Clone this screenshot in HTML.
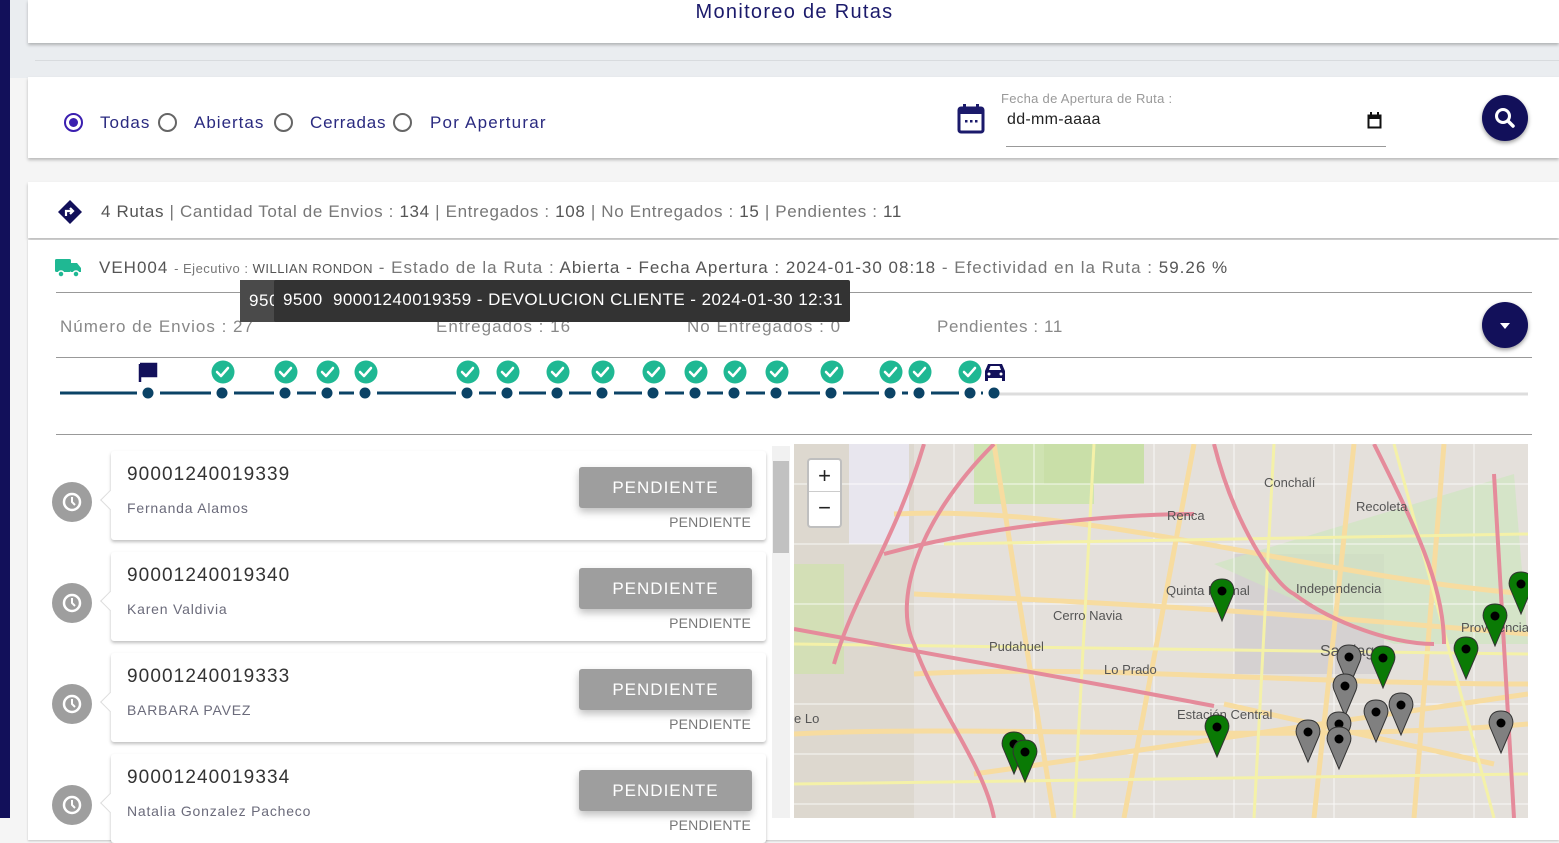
<!DOCTYPE html>
<html><head><meta charset="utf-8"><style>
*{box-sizing:border-box;margin:0;padding:0}
body{width:1559px;height:818px;overflow:hidden;background:#f5f5f5;font-family:"Liberation Sans",sans-serif;position:relative;color:#555;letter-spacing:.6px}
.abs{position:absolute}
.card{position:absolute;background:#fff;box-shadow:0 2px 3px rgba(0,0,0,.25)}
.navy{color:#1b1a6b}
</style></head><body>
<div class="abs" style="left:0;top:0;width:10px;height:818px;background:#12105a"></div>
<div class="abs" style="left:10px;top:0;width:1549px;height:78px;background:#eaedf0"></div>
<div class="abs" style="left:35px;top:60px;width:1524px;height:1px;background:#d8dbde"></div>
<div class="card" style="left:28px;top:0;width:1531px;height:43px"></div>
<div class="abs navy" style="left:0;width:1589px;top:1px;text-align:center;font-size:20px;letter-spacing:1.3px">Monitoreo de Rutas</div>

<div class="card" style="left:28px;top:77px;width:1531px;height:81px"></div>
<div class="abs" style="left:64px;top:113px;width:19px;height:19px;border:2px solid #3b1fb0;border-radius:50%"><div style="margin:3px;width:9px;height:9px;border-radius:50%;background:#3b1fb0"></div></div>
<div class="abs" style="left:100px;top:113px;font-size:17px;color:#2a2a80;letter-spacing:1px">Todas</div>
<div class="abs" style="left:158px;top:113px;width:19px;height:19px;border:2px solid #666;border-radius:50%"></div>
<div class="abs" style="left:194px;top:113px;font-size:17px;color:#2a2a80;letter-spacing:1px">Abiertas</div>
<div class="abs" style="left:274px;top:113px;width:19px;height:19px;border:2px solid #666;border-radius:50%"></div>
<div class="abs" style="left:310px;top:113px;font-size:17px;color:#2a2a80;letter-spacing:.8px">Cerradas</div>
<div class="abs" style="left:393px;top:113px;width:19px;height:19px;border:2px solid #666;border-radius:50%"></div>
<div class="abs" style="left:430px;top:113px;font-size:17px;color:#2a2a80;letter-spacing:1.2px">Por Aperturar</div>
<svg class="abs" style="left:957px;top:104px" width="28" height="30" viewBox="0 0 28 30"><rect x="2" y="4" width="24" height="24" rx="2" fill="none" stroke="#1b1a6b" stroke-width="3"/><rect x="2" y="4" width="24" height="6" fill="#1b1a6b"/><rect x="6" y="0" width="3" height="6" fill="#1b1a6b"/><rect x="19" y="0" width="3" height="6" fill="#1b1a6b"/><rect x="8" y="16" width="2.5" height="2.5" fill="#1b1a6b"/><rect x="13" y="16" width="2.5" height="2.5" fill="#1b1a6b"/><rect x="18" y="16" width="2.5" height="2.5" fill="#1b1a6b"/></svg>
<div class="abs" style="left:1001px;top:91px;font-size:13px;color:#999;letter-spacing:.3px">Fecha de Apertura de Ruta :</div>
<div class="abs" style="left:1007px;top:111px;font-size:16px;color:#222;letter-spacing:.3px">dd-mm-aaaa</div>
<svg class="abs" style="left:1367px;top:112px" width="15" height="17"><rect x="1.5" y="3.5" width="12" height="12" fill="none" stroke="#111" stroke-width="2"/><rect x="1" y="3" width="13" height="4" fill="#111"/><rect x="3" y="0" width="2" height="4" fill="#111"/><rect x="10" y="0" width="2" height="4" fill="#111"/></svg>
<div class="abs" style="left:1006px;top:146px;width:380px;height:1px;background:#999"></div>
<div class="abs" style="left:1482px;top:95px;width:46px;height:46px;border-radius:50%;background:#12105a;box-shadow:0 2px 4px rgba(0,0,0,.4)"><svg width="46" height="46"><circle cx="21" cy="21" r="6.5" fill="none" stroke="#fff" stroke-width="3"/><line x1="26" y1="26" x2="31" y2="31" stroke="#fff" stroke-width="3.5" stroke-linecap="round"/></svg></div>

<div class="card" style="left:28px;top:182px;width:1531px;height:56px"></div>
<svg class="abs" style="left:57px;top:199px" width="26" height="26" viewBox="0 0 26 26"><path d="M13 1 L25 13 L13 25 L1 13Z" fill="#12105a"/><path d="M9 17 V12 H15 M13 9 L16 12 L13 15" fill="none" stroke="#fff" stroke-width="2.2"/></svg>
<div class="abs" style="left:101px;top:202px;font-size:17px;color:#777;white-space:nowrap;letter-spacing:.65px"><span style="color:#555">4 Rutas</span> | Cantidad Total de Envios : <span style="color:#555">134</span> | Entregados : <span style="color:#555">108</span> | No Entregados : <span style="color:#555">15</span> | Pendientes : <span style="color:#555">11</span></div>

<div class="card" style="left:28px;top:240px;width:1531px;height:600px;box-shadow:0 1px 2px rgba(0,0,0,.2)"></div>
<svg class="abs" style="left:55px;top:258px" width="27" height="20" viewBox="0 0 27 20"><rect x="0" y="1" width="16" height="13" rx="1.5" fill="#1fb893"/><path d="M16 5 H22 L26 10 V14 H16Z" fill="#1fb893"/><circle cx="6" cy="16" r="3" fill="#1fb893" stroke="#fff" stroke-width="1.5"/><circle cx="21" cy="16" r="3" fill="#1fb893" stroke="#fff" stroke-width="1.5"/></svg>
<div class="abs" style="left:99px;top:258px;font-size:17px;color:#777;white-space:nowrap;letter-spacing:1.0px"><span style="color:#555">VEH004</span> <span style="font-size:13px;letter-spacing:.5px">- Ejecutivo : <span style="color:#555">WILLIAN RONDON</span></span> - Estado de la Ruta : <span style="color:#555">Abierta - Fecha Apertura : 2024-01-30 08:18</span> - Efectividad en la Ruta : <span style="color:#555">59.26 %</span></div>
<div class="abs" style="left:56px;top:292px;width:1476px;height:1px;background:#999"></div>
<div class="abs" style="left:60px;top:317px;font-size:17px;color:#888;letter-spacing:1px">Número de Envios : 27</div>
<div class="abs" style="left:436px;top:317px;font-size:17px;color:#888;letter-spacing:1px">Entregados : 16</div>
<div class="abs" style="left:687px;top:317px;font-size:17px;color:#888;letter-spacing:1px">No Entregados : 0</div>
<div class="abs" style="left:937px;top:317px;font-size:17px;color:#888;letter-spacing:.6px">Pendientes : 11</div>
<div class="abs" style="left:1482px;top:302px;width:46px;height:46px;border-radius:50%;background:#12105a;box-shadow:0 2px 4px rgba(0,0,0,.4)"><svg width="46" height="46"><path d="M18 21 H28 L23 27Z" fill="#fff"/></svg></div>
<div class="abs" style="left:240px;top:280px;width:110px;height:42px;background:#4a4a4a;color:#fff;font-size:17px;padding:11px 9px">950</div>
<div class="abs" style="left:274px;top:280px;width:576px;height:42px;background:#333;color:#fff;font-size:17px;padding:10px 9px;white-space:nowrap;border-radius:2px;letter-spacing:.45px">9500&nbsp; 90001240019359 - DEVOLUCION CLIENTE - 2024-01-30 12:31</div>
<div class="abs" style="left:56px;top:357px;width:1476px;height:1px;background:#999"></div>

<svg class="abs" style="left:0;top:355px" width="1559" height="50">
<line x1="995" y1="39" x2="1528" y2="39" stroke="#ddd" stroke-width="3"/>
<g stroke="#0b4366" stroke-width="3">
<line x1="60" y1="38" x2="137" y2="38"/><line x1="160" y1="38" x2="211" y2="38"/><line x1="234" y1="38" x2="274" y2="38"/><line x1="297" y1="38" x2="316" y2="38"/><line x1="339" y1="38" x2="354" y2="38"/><line x1="377" y1="38" x2="456" y2="38"/><line x1="479" y1="38" x2="496" y2="38"/><line x1="519" y1="38" x2="546" y2="38"/><line x1="569" y1="38" x2="591" y2="38"/><line x1="614" y1="38" x2="642" y2="38"/><line x1="665" y1="38" x2="684" y2="38"/><line x1="707" y1="38" x2="723" y2="38"/><line x1="746" y1="38" x2="765" y2="38"/><line x1="788" y1="38" x2="820" y2="38"/><line x1="843" y1="38" x2="879" y2="38"/><line x1="902" y1="38" x2="908" y2="38"/><line x1="931" y1="38" x2="959" y2="38"/><line x1="981" y1="38" x2="983" y2="38"/>
</g>
<g fill="#0b4366">
<circle cx="148" cy="38" r="5.5"/><circle cx="222" cy="38" r="5.5"/><circle cx="285" cy="38" r="5.5"/><circle cx="327" cy="38" r="5.5"/><circle cx="365" cy="38" r="5.5"/><circle cx="467" cy="38" r="5.5"/><circle cx="507" cy="38" r="5.5"/><circle cx="557" cy="38" r="5.5"/><circle cx="602" cy="38" r="5.5"/><circle cx="653" cy="38" r="5.5"/><circle cx="695" cy="38" r="5.5"/><circle cx="734" cy="38" r="5.5"/><circle cx="776" cy="38" r="5.5"/><circle cx="831" cy="38" r="5.5"/><circle cx="890" cy="38" r="5.5"/><circle cx="919" cy="38" r="5.5"/><circle cx="970" cy="38" r="5.5"/><circle cx="994" cy="38" r="5.5"/>
</g>
<path d="M140 9 V27 M140 9 H156 V21 H140" fill="#12105a" stroke="#12105a" stroke-width="2.5"/>
<g fill="#1fb893">
<circle cx="223" cy="17" r="11.5"/><circle cx="286" cy="17" r="11.5"/><circle cx="328" cy="17" r="11.5"/><circle cx="366" cy="17" r="11.5"/><circle cx="468" cy="17" r="11.5"/><circle cx="508" cy="17" r="11.5"/><circle cx="558" cy="17" r="11.5"/><circle cx="603" cy="17" r="11.5"/><circle cx="654" cy="17" r="11.5"/><circle cx="696" cy="17" r="11.5"/><circle cx="735" cy="17" r="11.5"/><circle cx="777" cy="17" r="11.5"/><circle cx="832" cy="17" r="11.5"/><circle cx="891" cy="17" r="11.5"/><circle cx="920" cy="17" r="11.5"/><circle cx="970" cy="17" r="11.5"/>
</g>
<g fill="none" stroke="#fff" stroke-width="2.5" stroke-linecap="round" stroke-linejoin="round">
<path d="M217 17l4 4 7-8"/><path d="M280 17l4 4 7-8"/><path d="M322 17l4 4 7-8"/><path d="M360 17l4 4 7-8"/><path d="M462 17l4 4 7-8"/><path d="M502 17l4 4 7-8"/><path d="M552 17l4 4 7-8"/><path d="M597 17l4 4 7-8"/><path d="M648 17l4 4 7-8"/><path d="M690 17l4 4 7-8"/><path d="M729 17l4 4 7-8"/><path d="M771 17l4 4 7-8"/><path d="M826 17l4 4 7-8"/><path d="M885 17l4 4 7-8"/><path d="M914 17l4 4 7-8"/><path d="M964 17l4 4 7-8"/>
</g>
<path d="M985 26 V16 L988 9 H1002 L1005 16 V26 H1002 V23 H988 V26Z" fill="#12105a"/><path d="M989 15 L990.5 11 H999.5 L1001 15Z" fill="#fff"/><circle cx="989" cy="19" r="1.5" fill="#fff"/><circle cx="1001" cy="19" r="1.5" fill="#fff"/>
</svg>
<div class="abs" style="left:56px;top:434px;width:1476px;height:1px;background:#999"></div>

<div class="abs" style="left:772px;top:446px;width:18px;height:372px;background:#f1f1f1"></div>
<div class="abs" style="left:773px;top:461px;width:16px;height:92px;background:#c1c1c1"></div>

<div id="list"></div>
<script>
var items=[["90001240019339","Fernanda Alamos",451],["90001240019340","Karen Valdivia",552],["90001240019333","BARBARA PAVEZ",653],["90001240019334","Natalia Gonzalez Pacheco",754]];
var h="";
items.forEach(function(it){var t=it[2];
h+='<div class="card" style="left:111px;top:'+t+'px;width:655px;height:89px;border-radius:3px"></div>';
h+='<div class="abs" style="left:103px;top:'+(t+42)+'px;width:14px;height:14px;background:#fff;transform:rotate(45deg);border-left:1px solid #ddd;border-bottom:1px solid #ddd"></div>';
h+='<div class="abs" style="left:52px;top:'+(t+31)+'px;width:40px;height:40px;border-radius:50%;background:#9e9e9e"><svg width="40" height="40"><circle cx="20" cy="20" r="8" fill="none" stroke="#fff" stroke-width="2.5"/><path d="M20 15v5l3 3" fill="none" stroke="#fff" stroke-width="2"/></svg></div>';
h+='<div class="abs" style="left:127px;top:'+(t+13)+'px;font-size:19px;color:#333;letter-spacing:1.1px">'+it[0]+'</div>';
h+='<div class="abs" style="left:127px;top:'+(t+49)+'px;font-size:14px;color:#6b6b7b;letter-spacing:.8px">'+it[1]+'</div>';
h+='<div class="abs" style="left:579px;top:'+(t+16)+'px;width:173px;height:41px;background:#9e9e9e;border-radius:3px;box-shadow:0 4px 8px rgba(0,0,0,.25);color:#fff;font-size:17px;text-align:center;line-height:41px;letter-spacing:1px">PENDIENTE</div>';
h+='<div class="abs" style="left:600px;width:151px;text-align:right;top:'+(t+63)+'px;font-size:14px;color:#777;letter-spacing:.2px">PENDIENTE</div>';
});
document.getElementById('list').innerHTML=h;
</script>

<div class="abs" style="left:794px;top:444px;width:734px;height:374px;background:#e4e0db;overflow:hidden;letter-spacing:0">
<svg width="734" height="374" style="position:absolute;left:0;top:0">
<rect x="0" y="0" width="120" height="374" fill="#ddd8cf"/>
<rect x="0" y="120" width="50" height="110" fill="#d3dfb6"/>
<rect x="180" y="0" width="120" height="60" fill="#cfe3b2"/>
<rect x="440" y="110" width="150" height="120" fill="#d5d1d1"/>
<path d="M420 120 L720 30 L734 200 L600 200Z" fill="#cfe6c0" opacity=".7"/>
<rect x="250" y="0" width="100" height="40" fill="#c9dfa8"/>
<rect x="55" y="0" width="60" height="100" fill="#e8e6ee"/>
<g stroke="#fff" stroke-width="1" fill="none" opacity=".8">
<path d="M0 40 H734 M0 100 H734 M0 160 H734 M0 260 H734 M0 310 H734 M0 360 H734"/>
<path d="M160 0 V374 M240 0 V374 M360 0 V374 M440 0 V374 M540 0 V374 M680 0 V374"/>
</g>
<g stroke="#f7dca0" stroke-width="5" fill="none">
<path d="M100 70 C300 60 500 130 734 150"/><path d="M120 230 C300 220 500 240 734 240"/><path d="M0 290 C200 280 500 300 734 280"/><path d="M200 0 L260 374"/><path d="M400 0 L330 374"/><path d="M560 0 L520 374"/><path d="M650 0 L620 374"/><path d="M120 150 C350 160 500 170 734 190"/><path d="M180 330 C400 300 600 270 734 250"/><path d="M430 260 L700 320"/>
</g>
<g stroke="#f4f1a8" stroke-width="3" fill="none">
<path d="M0 200 L734 210"/><path d="M300 0 L280 374"/><path d="M480 0 L460 374"/><path d="M150 100 L734 90"/><path d="M0 340 L734 330"/><path d="M600 0 L700 374"/>
</g>
<g stroke="#e58b9b" stroke-width="4" fill="none">
<path d="M0 185 L330 245 L420 262"/><path d="M200 0 C120 80 100 160 120 200 C140 260 190 320 200 374"/><path d="M40 220 C60 150 100 100 130 0"/><path d="M90 110 C200 80 330 70 400 70"/><path d="M420 0 C440 80 480 140 500 150 C540 180 600 200 640 200"/><path d="M580 0 C620 80 650 140 650 200"/><path d="M700 30 L720 374"/>
</g>
<g font-family="Liberation Sans" font-size="13" fill="#555">
<text x="470" y="43">Conchalí</text><text x="562" y="67">Recoleta</text><text x="373" y="76">Renca</text><text x="372" y="151">Quinta Normal</text><text x="502" y="149">Independencia</text><text x="259" y="176">Cerro Navia</text><text x="195" y="207">Pudahuel</text><text x="310" y="230">Lo Prado</text><text x="383" y="275">Estación Central</text><text x="667" y="188">Providencia</text><text x="526" y="212" font-size="16">Santiago</text><text x="0" y="279">e Lo</text>
</g>
</svg>
<div class="abs" style="left:13px;top:14px;width:35px;height:70px;background:#fff;border:2px solid rgba(0,0,0,.25);border-radius:4px;text-align:center;font-size:22px;color:#222;line-height:31px">+<div style="border-top:1px solid #ccc">−</div></div>
<svg width="734" height="374" style="position:absolute;left:0;top:0">
<defs><g id="pm"><path d="M0 0 C-12 0 -13 11 -11 16 L0 42 L11 16 C13 11 12 0 0 0Z" stroke="#333" stroke-width="1"/><circle cx="0" cy="12" r="4.5" fill="#000"/></g></defs>
<g fill="#0a7a05">
<use href="#pm" x="428" y="135"/><use href="#pm" x="220" y="288"/><use href="#pm" x="231" y="296"/><use href="#pm" x="423" y="271"/><use href="#pm" x="589" y="202"/><use href="#pm" x="672" y="193"/><use href="#pm" x="701" y="160"/><use href="#pm" x="727" y="128"/>
</g>
<g fill="#808080">
<use href="#pm" x="555" y="201"/><use href="#pm" x="551" y="230"/><use href="#pm" x="545" y="268"/><use href="#pm" x="514" y="276"/><use href="#pm" x="545" y="283"/><use href="#pm" x="582" y="256"/><use href="#pm" x="607" y="249"/><use href="#pm" x="707" y="267"/>
</g>
</svg>
</div>
</body></html>
